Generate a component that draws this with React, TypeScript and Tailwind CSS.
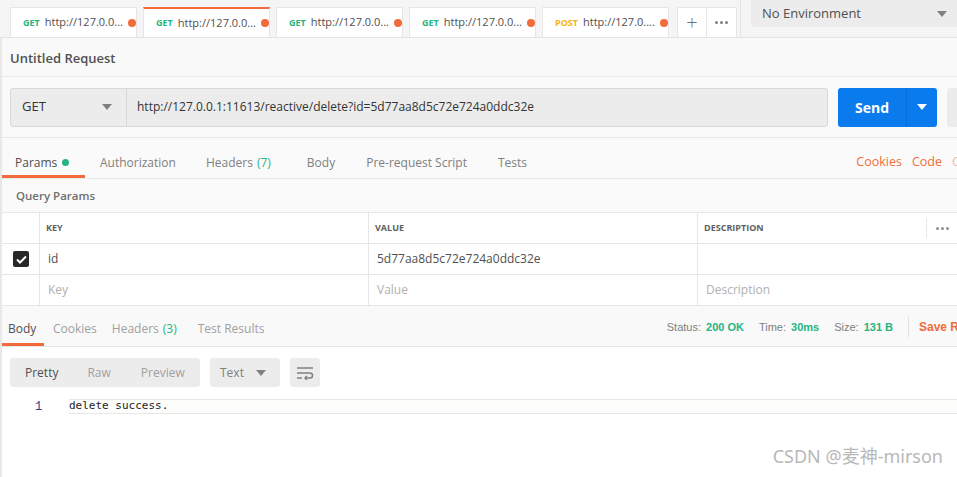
import React from 'react'

const font = { fontFamily: '"Open Sans", "Noto Sans CJK SC", sans-serif' }

interface ITab {
    method: "GET" | "POST";
    url: string;
    active?: boolean;
}

const tabs: ITab[] = [
    { method: "GET", url: "http://127.0.0..." },
    { method: "GET", url: "http://127.0.0...", active: true },
    { method: "GET", url: "http://127.0.0..." },
    { method: "GET", url: "http://127.0.0..." },
    { method: "POST", url: "http://127.0...." },
]

const Caret = ({ className }: { className: string }) => (
    <svg className={className} width="10" height="6" viewBox="0 0 10 6"><path d="M0 0h10L5 6z" fill="currentColor" /></svg>
)

const RequestTab = ({ method, url, active }: ITab) => (
    <div className={(active ? 'border-t-2 border-t-[#f26b3a] ' : 'border-t border-t-[#e6e6e6] ') + 'w-[127px] h-[30px] bg-white border-x border-x-[#e6e6e6] flex items-center pl-[12px] pr-[4px] gap-[5px]'}>
        <span className={(method === 'POST' ? 'text-[#f5b21b]' : 'text-[#26b47f]') + ' text-[9px] font-bold'}>{method}</span>
        <span className="text-[11px] text-[#505050] whitespace-nowrap flex-1">{url}</span>
        <span className="w-[8px] h-[8px] rounded-full bg-[#f26b3a] shrink-0"></span>
    </div>
)

const App = () => {
    return (
        <div className="w-[957px] h-[477px] bg-white overflow-hidden relative flex flex-col" style={font}>
            {/* top tabs */}
            <div className="h-[38px] shrink-0 bg-[#f5f5f5] border-b border-[#e4e4e4] flex">
                <div className="flex items-end gap-[6px] pl-[10px]">
                    {tabs.map((t, i) => <RequestTab key={i} {...t} />)}
                    <div className="ml-[2px] flex h-[30px] bg-white border-x border-t border-[#e6e6e6]">
                        <div className="w-[29px] flex items-center justify-center text-[#707070] text-[20px] font-light border-r border-[#e6e6e6]">+</div>
                        <div className="w-[29px] flex items-center justify-center gap-[2px]">
                            <span className="w-[3px] h-[3px] rounded-full bg-[#808080]"></span>
                            <span className="w-[3px] h-[3px] rounded-full bg-[#808080]"></span>
                            <span className="w-[3px] h-[3px] rounded-full bg-[#808080]"></span>
                        </div>
                    </div>
                </div>
                <div className="ml-[3px] w-px h-[38px] bg-[#e4e4e4]"></div>
                <div className="ml-[10px] flex-1 h-[27px] bg-[#ececec] rounded-bl-[3px] flex items-center justify-between pl-[11px] pr-[10px]">
                    <span className="text-[13px] text-[#505050]">No Environment</span>
                    <Caret className="text-[#808080]" />
                </div>
            </div>

            <div className="flex-1 flex flex-col border-l-2 border-[#e8e8e8]">
                {/* request name */}
                <div className="h-[39px] shrink-0 bg-[#f9f9f9] border-b border-[#e8e8e8] flex items-center pl-[8px] pt-[3px]">
                    <span className="text-[13px] text-[#505050] font-semibold">Untitled Request</span>
                </div>

                {/* url row */}
                <div className="h-[61px] shrink-0 bg-[#fafafa] border-b border-[#e8e8e8] flex items-center pl-[8px] gap-[10px]">
                    <div className="flex h-[39px] w-[818px] bg-[#ececec] border border-[#d8d8d8] rounded-[3px]">
                        <div className="w-[116px] flex items-center justify-between pl-[11px] pr-[14px] border-r border-[#d8d8d8]">
                            <span className="text-[13px] text-[#333]">GET</span>
                            <Caret className="text-[#808080]" />
                        </div>
                        <div className="flex items-center pl-[10px] text-[12px] text-[#333]">http://127.0.0.1:11613/reactive/delete?id=5d77aa8d5c72e724a0ddc32e</div>
                    </div>
                    <div className="flex h-[39px] w-[99px] bg-[#097bed] rounded-[3px]">
                        <div className="w-[69px] flex items-center justify-center text-white text-[14px] font-bold border-r border-[#0a6fd4]">Send</div>
                        <div className="flex-1 flex items-center justify-center"><Caret className="text-white" /></div>
                    </div>
                    <div className="h-[39px] flex-1 bg-[#ececec] rounded-l-[3px]"></div>
                </div>

                {/* request tabs */}
                <div className="h-[41px] shrink-0 bg-[#fafafa] border-b border-[#e8e8e8] flex items-stretch pt-[12px] text-[12px] text-[#808080]">
                    <div className="w-[83px] flex items-center pl-[13px] gap-[5px] text-[#505050] border-b-[3px] border-[#f26b3a]">
                        Params <span className="w-[7px] h-[7px] rounded-full bg-[#26b47f]"></span>
                    </div>
                    <div className="flex items-center ml-[15px] pb-[3px]">Authorization</div>
                    <div className="flex items-center ml-[30px] pb-[3px]">Headers <span className="ml-[4px] text-[#26b47f]">(7)</span></div>
                    <div className="flex items-center ml-[36px] pb-[3px]">Body</div>
                    <div className="flex items-center ml-[31px] pb-[3px]">Pre-request Script</div>
                    <div className="flex items-center ml-[31px] pb-[3px]">Tests</div>
                    <div className="flex items-center ml-auto gap-[10px] pb-[3px] text-[12.5px] text-[#f26b3a]">
                        <span>Cookies</span>
                        <span>Code</span>
                        <span className="text-[#f8b8a0] w-[5px] overflow-hidden">C</span>
                    </div>
                </div>

                {/* query params */}
                <div className="h-[33px] shrink-0 bg-[#fafafa] flex items-center pl-[14px] pt-[1px]">
                    <span className="text-[11.5px] font-semibold text-[#707070]">Query Params</span>
                </div>
                <div className="shrink-0 bg-white border-y border-[#e6e6e6] text-[12px]">
                    <div className="h-[31px] flex border-b border-[#e6e6e6] text-[9px] font-bold text-[#606060]">
                        <div className="w-[38px] border-r border-[#e6e6e6]"></div>
                        <div className="w-[329px] border-r border-[#e6e6e6] flex items-center pl-[6px]">KEY</div>
                        <div className="w-[329px] border-r border-[#e6e6e6] flex items-center pl-[6px]">VALUE</div>
                        <div className="flex-1 flex items-center pl-[6px]">DESCRIPTION</div>
                        <div className="w-[31px] my-[5px] border-l border-[#e6e6e6] flex items-center justify-center gap-[2px]">
                            <span className="w-[3px] h-[3px] rounded-full bg-[#909090]"></span>
                            <span className="w-[3px] h-[3px] rounded-full bg-[#909090]"></span>
                            <span className="w-[3px] h-[3px] rounded-full bg-[#909090]"></span>
                        </div>
                    </div>
                    <div className="h-[31px] flex border-b border-[#e6e6e6] text-[#505050]">
                        <div className="w-[38px] border-r border-[#e6e6e6] flex items-center justify-center pl-[1px]">
                            <div className="w-[16px] h-[16px] rounded-[2px] bg-[#282828] flex items-center justify-center">
                                <svg width="11" height="9" viewBox="0 0 11 9"><path d="M1 4.5l3 3 6-6" stroke="#fff" strokeWidth="2" fill="none" /></svg>
                            </div>
                        </div>
                        <div className="w-[329px] border-r border-[#e6e6e6] flex items-center pl-[8px]">id</div>
                        <div className="w-[329px] border-r border-[#e6e6e6] flex items-center pl-[8px]">5d77aa8d5c72e724a0ddc32e</div>
                        <div className="flex-1"></div>
                    </div>
                    <div className="h-[30px] flex text-[#b0b0b0]">
                        <div className="w-[38px] border-r border-[#e6e6e6]"></div>
                        <div className="w-[329px] border-r border-[#e6e6e6] flex items-center pl-[8px]">Key</div>
                        <div className="w-[329px] border-r border-[#e6e6e6] flex items-center pl-[8px]">Value</div>
                        <div className="flex-1 flex items-center pl-[8px]">Description</div>
                    </div>
                </div>

                {/* response bar */}
                <div className="h-[41px] shrink-0 bg-[#f9f9f9] border-b border-[#e6e6e6] flex items-stretch pt-[8px] text-[12px] text-[#a0a0a0]">
                    <div className="w-[42px] flex items-center pl-[6px] text-[#505050] border-b-[3px] border-[#f26b3a]">Body</div>
                    <div className="flex items-center ml-[9px] pb-[3px]">Cookies</div>
                    <div className="flex items-center ml-[15px] pb-[3px]">Headers <span className="ml-[4px] text-[#26b47f]">(3)</span></div>
                    <div className="flex items-center ml-[21px] pb-[3px]">Test Results</div>
                    <div className="ml-auto flex items-center text-[11px] text-[#808080] pb-[6px]" style={{ fontFamily: '"Liberation Sans", sans-serif' }}>
                        <span>Status:</span><span className="ml-[5px] text-[#26b47f] font-bold">200 OK</span>
                        <span className="ml-[15px]">Time:</span><span className="ml-[5px] text-[#26b47f] font-bold">30ms</span>
                        <span className="ml-[15px]">Size:</span><span className="ml-[5px] text-[#26b47f] font-bold">131 B</span>
                        <span className="ml-[15px] w-px h-[20px] bg-[#e0e0e0]"></span>
                        <span className="ml-[10px] text-[12px] text-[#f26b3a] font-bold w-[38px] overflow-hidden whitespace-nowrap">Save Response</span>
                    </div>
                </div>

                {/* response body */}
                <div className="flex-1 bg-white flex flex-col">
                    <div className="flex items-center mt-[11px] pl-[8px] gap-[10px] text-[12px]">
                        <div className="flex h-[29px] w-[190px] bg-[#ececec] rounded-[3px] items-center text-[#a0a0a0] pt-[1px]">
                            <span className="ml-[15px] text-[#505050]">Pretty</span>
                            <span className="ml-[29px]">Raw</span>
                            <span className="ml-[30px]">Preview</span>
                        </div>
                        <div className="flex h-[29px] w-[70px] bg-[#ececec] rounded-[3px] items-center justify-between pl-[10px] pr-[14px] pt-[1px] text-[#808080]">
                            Text <Caret className="text-[#808080]" />
                        </div>
                        <div className="flex h-[29px] w-[30px] bg-[#ececec] rounded-[3px] items-center justify-center">
                            <svg width="18" height="14" viewBox="0 0 18 14" fill="none" stroke="#808080" strokeWidth="1.5">
                                <path d="M1 2h16" />
                                <path d="M1 7h13a2.5 2.5 0 0 1 0 5H9" />
                                <path d="M11 10l-2 2 2 2" />
                                <path d="M1 12h5" />
                            </svg>
                        </div>
                    </div>
                    <div className="flex items-center mt-[12px] h-[15px]">
                        <span className="w-[67px] pl-[33px] text-[12px] text-[#2a3d8f]" style={{ fontFamily: '"Liberation Mono", monospace' }}>1</span>
                        <div className="flex-1 h-[15px] bg-[#fdfdfb] border-y border-[#e8e8e8] flex items-center text-[11px] text-[#222]" style={{ fontFamily: '"DejaVu Sans Mono", monospace' }}>
                            delete success.
                        </div>
                    </div>
                </div>
            </div>

            <div className="absolute right-[14px] bottom-[7px] text-[18px] text-[#b8b8b8]" style={{ fontFamily: '"Noto Sans", "Noto Sans CJK SC", sans-serif' }}>CSDN @麦神-mirson</div>
        </div>
    )
}
export default App
